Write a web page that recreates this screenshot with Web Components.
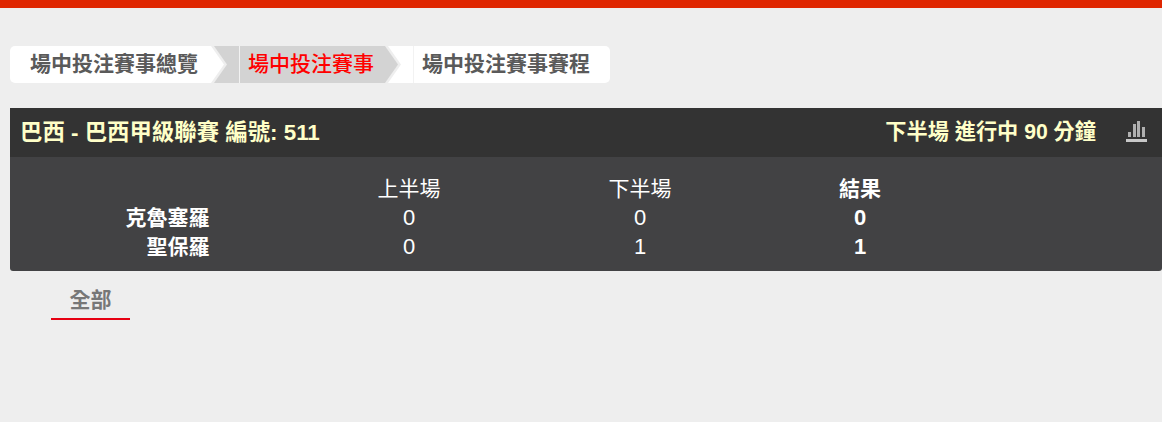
<!DOCTYPE html>
<html lang="zh-Hant">
<head>
<meta charset="utf-8">
<title>場中投注賽事</title>
<style>
    html, body { margin: 0; height: 100%; }
    body {
        background: #eee;
        font-family: "Liberation Sans", "Noto Sans CJK TC", sans-serif;
    }
</style>
</head>
<body>
<live-page>
    <crumb-bar>
        <crumb-item>場中投注賽事總覽</crumb-item>
        <crumb-item active>場中投注賽事</crumb-item>
        <crumb-item last>場中投注賽事賽程</crumb-item>
    </crumb-bar>
    <match-panel title="巴西 - 巴西甲級聯賽 編號: 511" status="下半場 進行中 90 分鐘">
        <score-row name="" first="上半場" second="下半場" total="結果"></score-row>
        <score-row name="克魯塞羅" first="0" second="0" total="0" digits></score-row>
        <score-row name="聖保羅" first="0" second="1" total="1" digits></score-row>
    </match-panel>
    <tab-strip><tab-item>全部</tab-item></tab-strip>
</live-page>

<script>
class LivePage extends HTMLElement {
    connectedCallback() {
        this.attachShadow({ mode: "open" });
        this.shadowRoot.innerHTML = `
            <style>
                :host { display: block; }
                .top { height: 8px; background: #df2600; }
                .content {
                    display: flex;
                    flex-direction: column;
                    padding: 38px 0 0 10px;
                }
            </style>
            <div class="top"></div>
            <div class="content"><slot></slot></div>
        `;
    }
}

class CrumbBar extends HTMLElement {
    connectedCallback() {
        this.attachShadow({ mode: "open" });
        this.shadowRoot.innerHTML = `
            <style>
                :host {
                    display: flex;
                    width: 600px;
                    height: 37px;
                    border-radius: 5px;
                    overflow: hidden;
                }
            </style>
            <slot></slot>
        `;
    }
}

class CrumbItem extends HTMLElement {
    connectedCallback() {
        this.attachShadow({ mode: "open" });
        const active = this.hasAttribute("active");
        const last = this.hasAttribute("last");
        // the arrow takes its colours from this item and the next one
        const fill = active ? "#d3d3d3" : "#fff";
        const behind = active ? "#fff" : "#d3d3d3";
        this.shadowRoot.innerHTML = `
            <style>
                :host {
                    display: flex;
                    height: 37px;
                    font-size: 21px;
                    font-weight: 700;
                    color: #5a5a5a;
                    white-space: nowrap;
                }
                :host([active]) { color: #f00; font-weight: 500; }
                :host([last]) { flex: 1; }
                .label {
                    display: flex;
                    align-items: center;
                    box-sizing: border-box;
                    width: 200px;
                    padding: 0 0 6px 20px;
                    background: #fff;
                }
                :host([active]) .label { width: 144px; padding-left: 8px; background: #d3d3d3; }
                :host([last]) .label { width: 100%; padding-left: 8px; }
                svg { display: block; }
                .sep { width: 1px; background: #f2f2f2; }
            </style>
            <div class="label"><slot></slot></div>
            ${last ? "" : `
            <svg width="29" height="37" viewBox="0 0 29 37">
                <rect width="29" height="37" fill="${behind}"/>
                <polygon points="0,0 4,0 17,18.5 4,37 0,37" fill="#eee"/>
                <polygon points="0,0 1,0 14,18.5 1,37 0,37" fill="${fill}"/>
            </svg>
            <div class="sep"></div>`}
        `;
    }
}

class MatchPanel extends HTMLElement {
    connectedCallback() {
        this.attachShadow({ mode: "open" });
        this.shadowRoot.innerHTML = `
            <style>
                :host {
                    display: block;
                    margin-top: 25px;
                    border-radius: 0 0 3px 3px;
                    overflow: hidden;
                    background: #424244;
                }
                .head {
                    display: flex;
                    align-items: center;
                    justify-content: space-between;
                    height: 49px;
                    padding: 0 15px 0 10px;
                    background: #333;
                    color: #ffffc8;
                    font-weight: 700;
                }
                .title { font-size: 22.4px; padding-bottom: 6px; }
                .status { font-size: 21.2px; padding-bottom: 6px; }
                .right { display: flex; align-items: center; gap: 30px; }
                svg { display: block; }
                .body { padding: 18px 0 9px; }
            </style>
            <div class="head">
                <span class="title"></span>
                <div class="right">
                    <span class="status"></span>
                    <svg width="21" height="23" viewBox="0 0 21 23">
                        <g fill="#b0b0b0">
                            <rect x="2" y="11" width="3" height="5"/>
                            <rect x="7" y="3" width="3" height="13"/>
                            <rect x="11" y="0" width="3" height="16"/>
                            <rect x="16" y="6" width="3" height="10"/>
                        </g>
                        <rect x="0" y="18" width="21" height="3" fill="#c8c8c8"/>
                    </svg>
                </div>
            </div>
            <div class="body"><slot></slot></div>
        `;
        this.shadowRoot.querySelector(".title").textContent = this.getAttribute("title");
        this.shadowRoot.querySelector(".status").textContent = this.getAttribute("status");
    }
}

class ScoreRow extends HTMLElement {
    connectedCallback() {
        this.attachShadow({ mode: "open" });
        this.shadowRoot.innerHTML = `
            <style>
                :host {
                    display: grid;
                    grid-template-columns: 283.5px 231px 231px 209px;
                    height: 29px;
                    line-height: 27px;
                    font-size: 21px;
                    color: #fff;
                    text-align: center;
                }
                :host([digits]) span:not(.name) { font-size: 22px; }
                .name { text-align: right; padding-right: 84px; font-weight: 700; }
                .total { font-weight: 700; }
            </style>
            <span class="name"></span>
            <span class="first"></span>
            <span class="second"></span>
            <span class="total"></span>
        `;
        for (const key of ["name", "first", "second", "total"]) {
            this.shadowRoot.querySelector("." + key).textContent = this.getAttribute(key);
        }
    }
}

class TabStrip extends HTMLElement {
    connectedCallback() {
        this.attachShadow({ mode: "open" });
        this.shadowRoot.innerHTML = `
            <style>
                :host { display: flex; padding: 14px 0 0 41px; }
            </style>
            <slot></slot>
        `;
    }
}

class TabItem extends HTMLElement {
    connectedCallback() {
        this.attachShadow({ mode: "open" });
        this.shadowRoot.innerHTML = `
            <style>
                :host {
                    display: block;
                    box-sizing: border-box;
                    width: 79px;
                    height: 35px;
                    line-height: 29px;
                    text-align: center;
                    font-size: 21px;
                    font-weight: 700;
                    color: #777;
                    border-bottom: 2px solid #e60012;
                }
            </style>
            <slot></slot>
        `;
    }
}

customElements.define("live-page", LivePage);
customElements.define("crumb-bar", CrumbBar);
customElements.define("crumb-item", CrumbItem);
customElements.define("match-panel", MatchPanel);
customElements.define("score-row", ScoreRow);
customElements.define("tab-strip", TabStrip);
customElements.define("tab-item", TabItem);
</script>
</body>
</html>
